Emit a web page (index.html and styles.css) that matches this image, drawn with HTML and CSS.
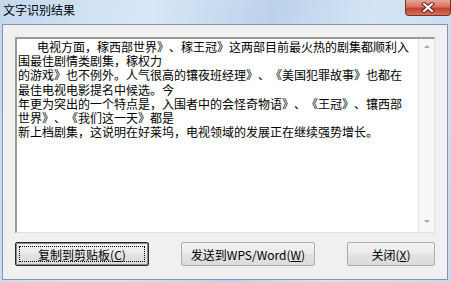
FILE: index.html
```html
<!DOCTYPE html>
<html lang="zh-CN">
<head>
    <meta charset="UTF-8">
    <meta name="viewport" content="width=device-width, initial-scale=1.0">
    <title>文字识别结果</title>
    <link rel="stylesheet" href="styles.css">
</head>
<body>
    <div class="window">
        <div class="titlebar">
            <span class="title">文字识别结果</span>
            <button class="close-btn" type="button" aria-label="关闭">
                <svg width="14" height="11" viewBox="0 0 14 11">
                    <path d="M3 2 L11 9 M11 2 L3 9" stroke="#5a2520" stroke-width="4" stroke-linecap="square"/>
                    <path d="M3 2 L11 9 M11 2 L3 9" stroke="#ffffff" stroke-width="2" stroke-linecap="square"/>
                </svg>
            </button>
        </div>

        <div class="client">
            <div class="result-box">
                <div class="result-text">
                    <span class="indent">电视方面，稼西部世界》、稼王冠》这两部目前最火热的剧集都顺利入</span><br>
                    围最佳剧情类剧集，稼权力<br>
                    的游戏》也不例外。人气很高的镶夜班经理》、《美国犯罪故事》也都在<br>
                    最佳电视电影提名中候选。今<br>
                    年更为突出的一个特点是，入围者中的会怪奇物语》、《王冠》、镶西部<br>
                    世界》、《我们这一天》都是<br>
                    新上档剧集，这说明在好莱坞，电视领域的发展正在继续强势增长。
                </div>
                <div class="scrollbar">
                    <span class="arrow up"></span>
                    <span class="arrow down"></span>
                </div>
            </div>

            <div class="actions">
                <button class="btn btn-default wide" type="button">复制到剪贴板(<u>C</u>)</button>
                <button class="btn wide" type="button">发送到WPS/Word(<u>W</u>)</button>
                <button class="btn narrow" type="button">关闭(<u>X</u>)</button>
            </div>
        </div>
    </div>
</body>
</html>
```

FILE: styles.css
```css
body {
  margin: 0;
  font-family: "Noto Sans CJK SC", "Liberation Sans", sans-serif;
  font-size: 12px;
  color: #000;
  text-spacing-trim: space-all;
}

.window {
  width: 451px;
  height: 282px;
  box-sizing: border-box;
  padding: 0 3px 2px 2px;
  display: flex;
  flex-direction: column;
  background: linear-gradient(100deg, #c3d8ef 0%, #d8e7f7 30%, #bcd2ea 55%, #d4e4f5 75%, #c7dbf0 100%);
}

.titlebar {
  height: 24px;
  display: flex;
  align-items: flex-start;
  justify-content: space-between;
}

.title {
  margin: 2px 0 0 1px;
  line-height: 16px;
}

.close-btn {
  width: 46px;
  height: 16px;
  margin-right: -3px;
  padding: 0;
  border: 1px solid #7a3128;
  border-top: none;
  border-radius: 0 0 4px 4px;
  background: linear-gradient(#e6a596 0%, #d6735f 45%, #c2412b 55%, #d6735a 100%);
  display: flex;
  align-items: center;
  justify-content: center;
}

.client {
  flex: 1;
  border: 1px solid #8396ad;
  background: #f0f0f0;
  padding: 12px;
  display: flex;
  flex-direction: column;
}

.result-box {
  height: 196px;
  box-sizing: border-box;
  border-top: 2px solid #9a9a9a;
  border-left: 2px solid #9a9a9a;
  border-right: 1px solid #e0e0e0;
  border-bottom: 1px solid #e0e0e0;
  background: #fff;
  display: flex;
}

.result-text {
  flex: 1;
  padding: 1px 0 0 1px;
  line-height: 14.2px;
  white-space: nowrap;
}

.indent {
  padding-left: 19px;
}

.scrollbar {
  width: 15px;
  border-left: 1px solid #e6e6e6;
  background: #f7f7f7;
  display: flex;
  flex-direction: column;
  justify-content: space-between;
  align-items: center;
  padding: 6px 0 9px;
}

.arrow {
  width: 0;
  height: 0;
  border-left: 3px solid transparent;
  border-right: 3px solid transparent;
}

.arrow.up {
  border-bottom: 3px solid #a8a8a8;
}

.arrow.down {
  border-top: 3px solid #a8a8a8;
}

.actions {
  margin-top: 9px;
  display: flex;
  justify-content: space-between;
}

.btn {
  position: relative;
  height: 24px;
  padding: 0;
  border: 1px solid #acacac;
  border-radius: 2px;
  background: linear-gradient(#f2f2f2 0%, #ebebeb 50%, #e2e2e2 50%, #dcdcdc 100%);
  font-family: "Noto Sans CJK SC", "Liberation Sans", sans-serif;
  font-size: 12px;
  color: #000;
}

.wide {
  width: 134px;
}

.narrow {
  width: 88px;
}

.btn-default {
  border-color: #2b2b2b;
  box-shadow: inset 0 0 0 1px #8a8a8a;
}

.btn-default::after {
  content: "";
  position: absolute;
  inset: 3px;
  border: 1px dotted #000;
}
```
